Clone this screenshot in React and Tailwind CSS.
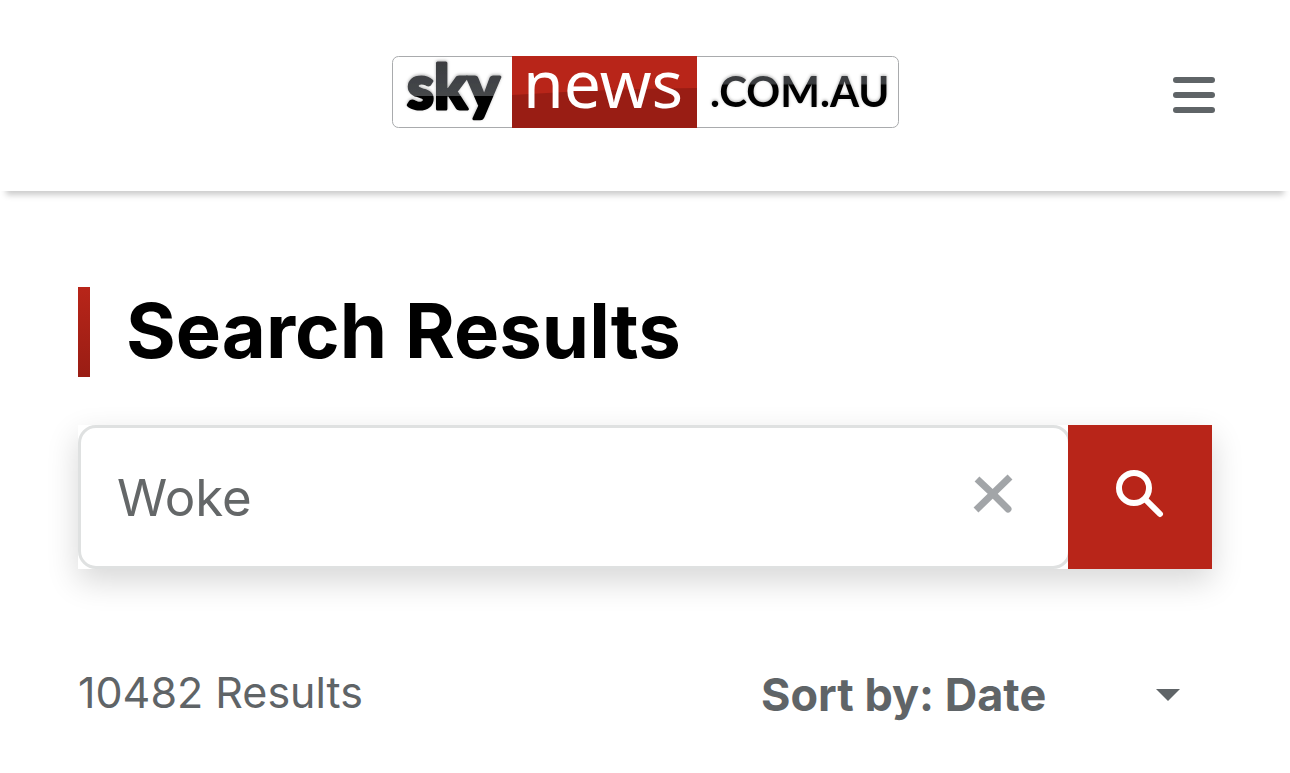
import React, { useState } from 'react';

const Logo = () => (
    <svg width="507" height="72" viewBox="0 0 507 72" role="img" aria-label="Sky News .com.au" className="overflow-visible">
        <defs>
            <linearGradient id="ink" gradientUnits="userSpaceOnUse" x1="0" y1="0" x2="0" y2="72">
                <stop offset="0" stopColor="#3a3c3f" />
                <stop offset="0.56" stopColor="#45474a" />
                <stop offset="0.56" stopColor="#000" />
            </linearGradient>
            <linearGradient id="inkSmall" gradientUnits="userSpaceOnUse" x1="0" y1="0" x2="0" y2="72">
                <stop offset="0" stopColor="#3a3c3f" />
                <stop offset="0.38" stopColor="#3a3c3f" />
                <stop offset="0.41" stopColor="#000" />
            </linearGradient>
            <filter id="glow" x="-10%" y="-20%" width="120%" height="140%">
                <feDropShadow dx="0" dy="-1" stdDeviation="1.5" floodColor="#000" floodOpacity="0.3" />
            </filter>
        </defs>
        <rect x="0.5" y="0.5" width="506" height="71" rx="6" fill="#fff" stroke="#a9abad" />
        <rect x="120" width="185" height="72" fill="#991d14" />
        <path d="M120 0H305V32Q212 33 120 39Z" fill="#b82519" />
        <text x="15" y="53" fontFamily="Lato, sans-serif" fontWeight="900" fontSize="61" fill="url(#ink)" stroke="url(#ink)" strokeWidth="3" strokeLinejoin="round" filter="url(#glow)">sky</text>
        <text x="131" y="52" fontFamily="'Noto Sans', sans-serif" fontSize="66" fill="#fff">news</text>
        <text x="318" y="51" fontFamily="Lato, sans-serif" fontWeight="700" fontSize="42" fill="url(#inkSmall)" filter="url(#glow)">.COM.AU</text>
    </svg>
);

const Header = () => (
    <header className="grid grid-cols-[1fr_auto_1fr] items-start bg-white px-[75px] pt-14 pb-[57px] shadow-[0_10px_6px_-6px_#cccccc]">
        <a href="#home" className="col-start-2">
            <Logo />
        </a>
        <button type="button" aria-label="Menu" className="flex flex-col gap-[9px] justify-self-end py-[21px]">
            <span className="h-[6px] w-[42px] rounded-full bg-[#5f6467]" />
            <span className="h-[6px] w-[42px] rounded-full bg-[#5f6467]" />
            <span className="h-[6px] w-[42px] rounded-full bg-[#5f6467]" />
        </button>
    </header>
);

const SearchForm = () => {
    const [query, setQuery] = useState('Woke');

    return (
        <form
            onSubmit={(e) => e.preventDefault()}
            className="mt-12 flex h-36 bg-white shadow-[0_12px_30px_rgba(0,0,0,0.16)]"
        >
            <div className="relative -mr-[3px] flex-1">
                <input
                    type="text"
                    aria-label="Search"
                    value={query}
                    onChange={(e) => setQuery(e.target.value)}
                    className="h-full w-full rounded-[18px] border-[3px] border-[#dfe1e1] bg-white pr-28 pl-9 text-[51px] text-[#646768] outline-none"
                />
                <button
                    type="button"
                    aria-label="Clear search"
                    onClick={() => setQuery('')}
                    className="absolute inset-y-0 right-14 flex items-center pb-1.5"
                >
                    <svg width="42" height="40" viewBox="0 0 42 40" fill="none" stroke="#a2a5a8" strokeWidth="7">
                        <path d="M35 35L19 19" strokeLinecap="round" />
                        <path d="M21 21L4 5M3 36L37 3" />
                    </svg>
                </button>
            </div>
            <button type="submit" aria-label="Submit search" className="relative flex w-36 items-center justify-center bg-[#b82519] pb-1.5">
                <svg width="48" height="48" viewBox="0 0 48 48" fill="none" stroke="#fff" strokeWidth="6" strokeLinecap="round">
                    <circle cx="18" cy="18" r="15" />
                    <path d="M29 29 L44 44" />
                </svg>
            </button>
        </form>
    );
};

const App = () => {
    return (
        <div className="min-h-screen bg-white font-['Inter',sans-serif]">
            <Header />
            <main className="px-[78px] pt-24">
                <div className="flex h-[90px]">
                    <span className="w-3 bg-linear-to-b from-[#b82519] to-[#991d14]" />
                    <h1 className="pl-9 text-[76px] leading-[86px] font-bold text-black">Search Results</h1>
                </div>
                <SearchForm />
                <div className="mt-24 flex items-start justify-between text-[#5f6467]">
                    <p className="text-[43px] leading-[54px]">10482 Results</p>
                    <div className="relative flex items-center">
                        <select
                            aria-label="Sort results"
                            className="w-[451px] appearance-none bg-transparent text-[45px] leading-[60px] font-bold outline-none"
                        >
                            <option>Sort by: Date</option>
                            <option>Sort by: Relevance</option>
                        </select>
                        <svg width="24" height="12" viewBox="0 0 24 12" className="pointer-events-none absolute right-8" fill="#5f6467">
                            <path d="M0 0H24L12 12Z" />
                        </svg>
                    </div>
                </div>
            </main>
        </div>
    );
};

export default App;
